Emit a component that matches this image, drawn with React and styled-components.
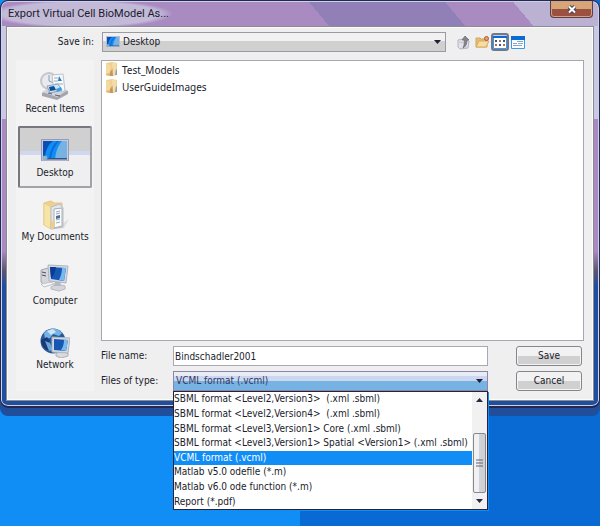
import React from "react";
import styled, { createGlobalStyle, css } from "styled-components";

const Global = createGlobalStyle`
  *, *::before, *::after { box-sizing: border-box; }
  body {
    margin: 0;
    color: #201c2c;
    font: 10px/14px "DejaVu Sans Condensed", "Noto Sans", sans-serif;
  }
  button, input, select { font: inherit; color: inherit; }
`;

const Wallpaper = styled.div`
  min-height: 100vh;
  background: linear-gradient(90deg, #118ef6 0 50%, #0a6ad3 50%);
`;

const Dialog = styled.section`
  display: flex;
  flex-direction: column;
  border: 1px solid #29264a;
  border-bottom-width: 2px;
  border-radius: 8px;
  padding: 0 5px 5px;
  background:
    radial-gradient(ellipse 92px 14px at 80px 13px, #c3bad8 0 85%, transparent) 0 0 / 100% 25px no-repeat,
    linear-gradient(50deg, #a98bc2 0 53%, #9180b8 53% 75%, #a98bc2 75% 86%, #bbb1d2 86%) 0 0 / 100% 25px no-repeat,
    linear-gradient(180deg, #c9c9e4 0 118px, #a98bc2 118px 250px, #5c5470 270px, #1f4f9c 285px);
  box-shadow: inset 0 0 0 1px #c5d3f0, 0 8px 0 #1f4f9c;
`;

const TitleBar = styled.header`
  display: flex;
  align-items: flex-start;
  justify-content: space-between;
  height: 25px;
  padding: 0 1px 0 2px;
`;

const Title = styled.h1`
  margin: 5px 0 0;
  font: 11px/16px Roboto, "Noto Sans", sans-serif;
`;

const CloseButton = styled.button`
  display: grid;
  place-items: center;
  width: 43px;
  height: 17px;
  padding: 0;
  border: 1px solid #5c3c4a;
  border-top: 0;
  border-radius: 0 0 4px 4px;
  background: linear-gradient(#d6a578 0 50%, #9c5140 50%);
  box-shadow: inset 0 0 0 1px #d3a27c;
`;

const Client = styled.main`
  display: grid;
  grid-template-columns: 78px 1fr;
  column-gap: 7px;
  padding: 5px 9px 9px;
  border: 1px solid #8c8c94;
  background: #efefef;
  box-shadow: inset 0 0 0 1px #fbfbfb;
`;

const LookIn = styled.div`
  grid-column: 1 / -1;
  display: flex;
  align-items: center;
  height: 20px;
  margin-bottom: 8px;
`;

const LookInLabel = styled.label`
  width: 86px;
  padding-right: 8px;
  text-align: right;
`;

const SelectWrap = styled.div`
  position: relative;
  flex: 0 1 ${(p) => p.$basis};
  min-width: 0;
`;

const Select = styled.select`
  display: block;
  width: 100%;
  height: 20px;
  padding: 0 20px 0 ${(p) => (p.$icon ? "20px" : "2px")};
  appearance: none;
  border: 1px solid #9a9aa2;
  border-radius: 0;
  background: linear-gradient(#f1f1f1 0 45%, #d0d0d0 45%);
  ${(p) =>
    p.$open &&
    css`
      border-color: #8e86a8;
      color: #35355e;
      background: linear-gradient(#e8ecf5 0 20%, #cbd7f0 20% 48%, #76b3e3 48%);
    `}
`;

const Arrow = styled.svg`
  position: absolute;
  right: 5px;
  top: 8px;
  pointer-events: none;
`;

const FieldIcon = styled.span`
  position: absolute;
  left: 4px;
  top: 4px;
  line-height: 0;
  pointer-events: none;
`;

const Tools = styled.div`
  display: flex;
  align-items: center;
  margin-left: 9px;
`;

const Tool = styled.button`
  display: grid;
  place-items: center;
  width: 18px;
  height: 18px;
  padding: 0;
  border: ${(p) => (p.$on ? "2px solid #76768a" : "0")};
  border-radius: 3px;
  background: ${(p) => (p.$on ? "#b8d3ee" : "none")};
`;

const Places = styled.nav`
  display: flex;
  flex-direction: column;
  gap: 2px;
  padding: 2px 2px 9px;
  background: #f3f3f3;
`;

const Place = styled.button`
  display: flex;
  flex-direction: column;
  align-items: center;
  gap: 2px;
  height: 62px;
  padding: 8px 0 0;
  border: 2px solid transparent;
  border-radius: 2px;
  background: none;
  white-space: nowrap;
  ${(p) =>
    p.$active &&
    css`
      border-color: #77777f #a2a2a8 #a2a2a8 #77777f;
      background: linear-gradient(#d0d0d0 0 40%, #cfd8f0 40% 47%, #efefef 47%);
    `}
`;

const PlaceIcon = styled.span`
  display: grid;
  place-items: center;
  height: 28px;
`;

const Content = styled.div`
  display: flex;
  flex-direction: column;
  min-width: 0;
`;

const FileList = styled.ul`
  min-height: 281px;
  margin: 0 0 5px;
  padding: 0 3px;
  border: 1px solid #a9a6b2;
  background: #fff;
  list-style: none;
  font-family: "Noto Sans", sans-serif;
`;

const FileItem = styled.li`
  display: flex;
  align-items: center;
  gap: 4px;
  height: 17px;
`;

const Form = styled.form`
  display: grid;
  grid-template-columns: 72px minmax(0, 1fr) 66px;
  align-items: center;
  row-gap: 5px;
  padding-right: 2px;
`;

const Control = styled.div`
  position: relative;
  margin-right: 28px;
`;

const TextInput = styled.input`
  display: block;
  width: 100%;
  height: 20px;
  padding: 0 1px;
  border: 1px solid #aaa7b6;
  background: #fff;
`;

const PushButton = styled.button`
  height: 20px;
  padding: 0;
  border: 1px solid #85858d;
  border-radius: 3px;
  background: linear-gradient(#f2f2f2 0 52%, #d0d0d0 52%);
  box-shadow: inset 0 0 0 1px #f4f4f4;
`;

const Popup = styled.div`
  position: absolute;
  z-index: 1;
  top: 100%;
  left: 0;
  right: 0;
  display: flex;
  height: 119px;
  border: 1px solid #25223a;
  background: #fff;
  box-shadow: 1px 1px 0 #118ef6;
`;

const Options = styled.ul`
  flex: 1;
  display: grid;
  grid-auto-rows: 1fr;
  min-width: 0;
  margin: 0;
  padding: 0;
  list-style: none;
  white-space: pre;
`;

const Option = styled.li`
  display: flex;
  align-items: center;
  line-height: 14px;
  background: ${(p) => (p.$selected ? "#118ef6" : "#fff")};
  color: ${(p) => (p.$selected ? "#fff" : "inherit")};
`;

const ScrollTrack = styled.div`
  display: flex;
  flex-direction: column;
  align-items: center;
  justify-content: space-between;
  width: 15px;
  padding: 6px 0;
  background: #f1f1f1;
`;

const Thumb = styled.div`
  display: grid;
  place-items: center;
  width: 13px;
  height: 60px;
  margin-top: 24px;
  border: 1px solid #88888f;
  border-radius: 2px;
  background: linear-gradient(90deg, #f1f1f1 0 45%, #cdd3e2 45% 60%, #d0d0d0 60%);
`;

function Caret({ up }) {
  return (
    <svg width="7" height="4" viewBox="0 0 7 4" aria-hidden="true">
      <path d={up ? "M0 4h7L3.500 0z" : "M0 0h7L3.500 4z"} fill="#29263e" />
    </svg>
  );
}

function DesktopIcon({ size = 28 }) {
  return (
    <svg width={size} height={size * 0.8} viewBox="0 0 28 22.400" aria-hidden="true">
      <path d="M.5.500h27v21.500H.5z" fill="#c8cce0" stroke="#9b98b5" />
      <path d="M2 2h24v18H2z" fill="#0b4fb4" />
      <path d="M12 2h14v18H4C4 12 7 6 12 2z" fill="#118ef6" />
      <path d="M21 2h5v18H14c1-8 3-13 7-18z" fill="#76b3e3" />
      <path d="M16 2h2c-4 5-7 10-8 18H8c1-8 4-14 8-18z" fill="#0b6bd3" />
      <path d="M2 19h24v1.500H2z" fill="#345583" />
      <circle cx="4" cy="19" r="2.500" fill="#76b3e3" />
      <circle cx="3.500" cy="19" r="1" fill="#efa36b" />
    </svg>
  );
}

function RecentIcon() {
  return (
    <svg width="30" height="28" viewBox="0 0 30 28" aria-hidden="true">
      <path d="M2 21l8-5 18 3v3l-11 6L2 24z" fill="#a5a5ad" />
      <path d="M2 20l9-5 17 3-11 7z" fill="#d3d4da" />
      <circle cx="9" cy="9" r="8" fill="#e8eaee" stroke="#c3c6cf" strokeWidth="2" />
      <path d="M9 3v6l5 2" fill="none" stroke="#8e9eae" />
      <path d="M12 3l11-1 2 17-11 1z" fill="#f7fafd" stroke="#bcc2cb" />
      <path d="M14 6h4m-4 3h4m-3 3h8" stroke="#a0adba" />
      <path d="M19 4l3 5h-4z" fill="#347bb9" />
      <path d="M7 14l11-2 4 6-12 3z" fill="#cde5f6" stroke="#84a8c5" />
      <path d="M9 15l5-1 2 4-6 1z" fill="#164b91" />
      <path d="M16 17l5-2 1 3-5 2z" fill="#349ee4" />
      <path d="M8 21l4 1m3 1l5 1" stroke="#63636f" />
    </svg>
  );
}

function DocumentsIcon() {
  return (
    <svg width="28" height="30" viewBox="0 0 28 30" aria-hidden="true">
      <path d="M21 24l7-5-5 9-8 1z" fill="#dedede" />
      <path d="M3 3l7-2 3 2h8v22H3z" fill="#eed18c" stroke="#e0c584" />
      <path d="M3 3l7 4v22l-7-4z" fill="#f8e4a4" stroke="#e6cf93" />
      <path d="M10 7l9-3 3 4v19l-12 2z" fill="#e3e7ed" stroke="#b9bdc7" />
      <path d="M13 9l8-1v18l-8 2z" fill="#fafbfd" stroke="#a9adb7" />
      <path d="M15 12l4-1m-4 3l4-1m-4 7l4-1m-4 4l4-1" stroke="#a0a9b7" />
      <path d="M15 16l4-1v3l-4 1z" fill="#526b91" />
      <path d="M10 20v9l4-2v-5z" fill="#e9cf8b" />
    </svg>
  );
}

function ComputerIcon() {
  return (
    <svg width="30" height="28" viewBox="0 0 30 28" aria-hidden="true">
      <path d="M1 6l7-2 3 2v14l-6 1-4-3z" fill="#d5d7dd" stroke="#a4a6af" />
      <path d="M2 8l4 1m-4 2l4 1" stroke="#4b4d5b" />
      <path d="M11 23l6-3 8 2v3l-6 2-8-2z" fill="#d4d6da" stroke="#b5b8c0" />
      <path d="M15 17h5l1 5h-7z" fill="#b4b8c2" />
      <path d="M8 1l20 1-2 17-17-2z" fill="#d3d8e1" stroke="#b2b5c1" />
      <path d="M10 3l16 1-2 13-13-2z" fill="#1558b3" />
      <path d="M22 4l4 0-2 13-5-1c2-4 3-8 3-12z" fill="#79b9ed" />
      <path d="M10 3h6c-1 5-2 9-5 11z" fill="#0c3b94" />
      <path d="M1 20l10-2 3 2-10 3z" fill="#f2f3f5" stroke="#c0c2c7" />
    </svg>
  );
}

function NetworkIcon() {
  return (
    <svg width="30" height="30" viewBox="0 0 30 30" aria-hidden="true">
      <circle cx="13" cy="13" r="12.500" fill="#275a9d" />
      <path d="M4 5C10-1 18 0 22 5l-3 3-6-2-3 4-5 1z" fill="#76b3e3" />
      <path d="M1 12l6-3 3 4-3 3 3 7-3-1C3 20 1 16 1 12z" fill="#1c3977" />
      <path d="M7 3l6-2 3 3-5 3z" fill="#cce5f6" />
      <path d="M5 13l5 2 3 7-4 1z" fill="#68a7d3" />
      <path d="M16 26l5-3 7 2v3l-7 2-5-2z" fill="#d8dade" stroke="#aeb0b8" />
      <path d="M12 9l18 1-2 15-16-1z" fill="#d3d8e1" stroke="#b0b4c0" />
      <path d="M14 11l14 1-2 11-12-1z" fill="#1558b3" />
      <path d="M24 12l4 0-2 11-5-1c2-3 3-6 3-10z" fill="#79b9ed" />
    </svg>
  );
}

function FolderIcon() {
  return (
    <svg width="13" height="15" viewBox="0 0 13 15" aria-hidden="true">
      <path d="M1 1l6-1 5 1v12l-6 1-5-1z" fill="#efd093" />
      <path d="M1 1l4 2v11l-4-1z" fill="#f5d9a0" />
      <path d="M1 12l4-1 2 2-2 1-4-1z" fill="#e2b774" />
      <path d="M5 10l3-4v8l-3 0z" fill="#c3965c" />
      <path d="M7 1l4 0v12l-3 1z" fill="#f3dca8" />
      <path d="M11 7l1 1v5h-2z" fill="#8ba3b1" />
    </svg>
  );
}

function UpIcon() {
  return (
    <svg width="14" height="15" viewBox="0 0 14 15" aria-hidden="true">
      <path d="M1 5l5-1 6 2-1 7-8 1-2-2z" fill="#e2e2ea" stroke="#b4b4c2" />
      <path d="M2 7l6 1 1 5" fill="none" stroke="#c4c4d1" />
      <path d="M8 1l4 4h-2c0 4-1 6-4 8 1-3 2-5 1-8H5z" fill="#85858e" stroke="#6b6b75" strokeWidth=".7" />
    </svg>
  );
}

function NewFolderIcon() {
  return (
    <svg width="15" height="14" viewBox="0 0 15 14" aria-hidden="true">
      <path d="M1 3h4l1 1h6v8H1z" fill="#e7bb72" stroke="#d0a55f" />
      <path d="M4 6h10l-3 6H1z" fill="#f7dda0" stroke="#d4ac67" />
      <circle cx="11.500" cy="3.500" r="2" fill="#e8a36b" stroke="#a8583b" />
    </svg>
  );
}

function GridIcon() {
  return (
    <svg width="14" height="13" viewBox="0 0 14 13" aria-hidden="true">
      <path d="M.5.500h13v12H.5z" fill="#fff" stroke="#399ae6" />
      <path d="M0 0h14v2H0z" fill="#0b6bd3" />
      <path d="M2 4h2v2H2zm8 0h2v2h-2zM6 8h2v2H6z" fill="#31578e" />
      <path d="M6 4h2v2H6zM2 8h2v2H2zm8 0h2v2h-2z" fill="#ad725a" />
    </svg>
  );
}

function DetailsIcon() {
  return (
    <svg width="14" height="13" viewBox="0 0 14 13" aria-hidden="true">
      <path d="M.5.500h13v12H.5z" fill="#fff" stroke="#399ae6" />
      <path d="M0 0h14v4H0z" fill="#0b6bd3" />
      <path d="M6 5.500h6m-10 2h4m1 0h5m-10 2h9" stroke="#80abd1" />
    </svg>
  );
}

const places = [
  ["Recent Items", RecentIcon],
  ["Desktop", DesktopIcon],
  ["My Documents", DocumentsIcon],
  ["Computer", ComputerIcon],
  ["Network", NetworkIcon],
];

const formats = [
  "SBML format <Level2,Version3>  (.xml .sbml)",
  "SBML format <Level2,Version4>  (.xml .sbml)",
  "SBML format <Level3,Version1> Core (.xml .sbml)",
  "SBML format <Level3,Version1> Spatial <Version1> (.xml .sbml)",
  "VCML format (.vcml)",
  "Matlab v5.0 odefile (*.m)",
  "Matlab v6.0 ode function (*.m)",
  "Report (*.pdf)",
];
const selectedFormat = "VCML format (.vcml)";

function ArrowDown() {
  return (
    <Arrow width="7" height="4" viewBox="0 0 7 4" aria-hidden="true">
      <path d="M0 0h7L3.500 4z" fill="#201c38" />
    </Arrow>
  );
}

export default function App() {
  return (
    <Wallpaper>
      <Global />
      <Dialog role="dialog" aria-labelledby="title">
        <TitleBar>
          <Title id="title">Export Virtual Cell BioModel As...</Title>
          <CloseButton aria-label="Close">
            <svg width="10" height="9" viewBox="0 0 10 9" aria-hidden="true">
              <path d="M2 1.500l6 6m0-6l-6 6" stroke="#4a4254" strokeWidth="4" />
              <path d="M2 1.500l6 6m0-6l-6 6" stroke="#fff" strokeWidth="2" />
            </svg>
          </CloseButton>
        </TitleBar>
        <Client>
          <LookIn>
            <LookInLabel htmlFor="folder">Save in:</LookInLabel>
            <SelectWrap $basis="344px">
              <Select id="folder" $icon defaultValue="Desktop">
                <option>Desktop</option>
              </Select>
              <FieldIcon><DesktopIcon size={14} /></FieldIcon>
              <ArrowDown />
            </SelectWrap>
            <Tools>
              <Tool aria-label="Up one level"><UpIcon /></Tool>
              <Tool aria-label="Create new folder"><NewFolderIcon /></Tool>
              <Tool $on aria-label="List view" aria-pressed="true"><GridIcon /></Tool>
              <Tool aria-label="Details view"><DetailsIcon /></Tool>
            </Tools>
          </LookIn>
          <Places aria-label="Places">
            {places.map(([name, Icon]) => (
              <Place key={name} $active={name === "Desktop"}>
                <PlaceIcon><Icon /></PlaceIcon>
                {name}
              </Place>
            ))}
          </Places>
          <Content>
            <FileList>
              <FileItem><FolderIcon />Test_Models</FileItem>
              <FileItem><FolderIcon />UserGuideImages</FileItem>
            </FileList>
            <Form onSubmit={(e) => e.preventDefault()}>
              <label htmlFor="name">File name:</label>
              <Control>
                <TextInput id="name" defaultValue="Bindschadler2001" />
              </Control>
              <PushButton type="submit">Save</PushButton>
              <label htmlFor="type">Files of type:</label>
              <Control>
                <Select id="type" $open defaultValue={selectedFormat}>
                  {formats.map((f) => <option key={f}>{f}</option>)}
                </Select>
                <ArrowDown />
                <Popup>
                  <Options role="listbox" aria-label="Files of type">
                    {formats.map((f) => (
                      <Option key={f} role="option" aria-selected={f === selectedFormat} $selected={f === selectedFormat}>
                        {f}
                      </Option>
                    ))}
                  </Options>
                  <ScrollTrack>
                    <Caret up />
                    <Thumb>
                      <svg width="7" height="8" viewBox="0 0 7 8" aria-hidden="true">
                        <path d="M0 1h7M0 4h7M0 7h7" stroke="#62627a" />
                      </svg>
                    </Thumb>
                    <Caret />
                  </ScrollTrack>
                </Popup>
              </Control>
              <PushButton type="button">Cancel</PushButton>
            </Form>
          </Content>
        </Client>
      </Dialog>
    </Wallpaper>
  );
}
